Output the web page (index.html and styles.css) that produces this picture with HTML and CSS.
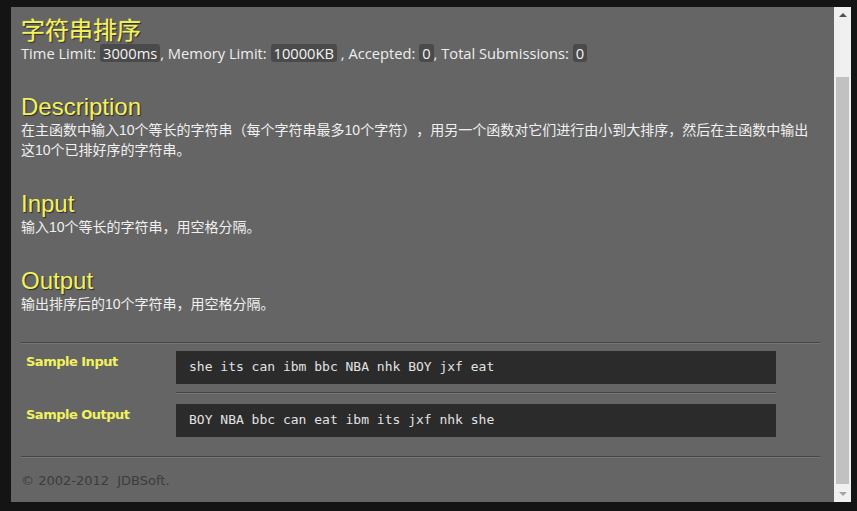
FILE: index.html
```html
<!DOCTYPE html>
<html>
<head>
<meta charset="utf-8">
<link rel="stylesheet" href="styles.css">
</head>
<body>
<div class="frame">
  <div class="window">
    <div class="content">
      <h1 class="title">字符串排序</h1>
      <div class="meta">Time Limit: <span class="badge">3000ms</span>, Memory Limit: <span class="badge">10000KB</span> , Accepted: <span class="badge">0</span>, Total Submissions: <span class="badge">0</span></div>

      <h2 class="heading">Description</h2>
      <p class="text">在主函数中输入10个等长的字符串（每个字符串最多10个字符），用另一个函数对它们进行由小到大排序，然后在主函数中输出这10个已排好序的字符串。</p>

      <h2 class="heading">Input</h2>
      <p class="text">输入10个等长的字符串，用空格分隔。</p>

      <h2 class="heading">Output</h2>
      <p class="text">输出排序后的10个字符串，用空格分隔。</p>

      <hr class="rule">
      <div class="samples">
        <div class="label">Sample Input</div>
        <div class="cell">
          <pre class="code">she its can ibm bbc NBA nhk BOY jxf eat</pre>
          <hr class="rule inner">
        </div>
        <div class="label">Sample Output</div>
        <div class="cell">
          <pre class="code">BOY NBA bbc can eat ibm its jxf nhk she</pre>
        </div>
      </div>
      <hr class="rule foot-rule">
      <div class="footer">© 2002-2012 &nbsp;JDBSoft.</div>
    </div>
    <div class="scrollbar">
      <div class="arrow up"></div>
      <div class="track"><div class="thumb"></div></div>
      <div class="arrow down"></div>
    </div>
  </div>
</div>
</body>
</html>
```
FILE: styles.css
```css
html, body {
  margin: 0;
  padding: 0;
  background: #141414;
}
.frame {
  width: 857px;
  height: 511px;
  box-sizing: border-box;
  padding: 7px 6px 9px 11px;
}
.window {
  display: flex;
  height: 495px;
}
.content {
  flex: 1;
  background: #656565;
  padding: 0 14px 0 10px;
  overflow: hidden;
  font-family: "Noto Sans CJK SC", sans-serif;
  color: #f0f0f0;
  text-spacing-trim: space-all;
}
.title {
  margin: 8px 0 0;
  font-size: 24px;
  line-height: 28px;
  font-weight: normal;
  color: #f2f25e;
  text-shadow: 1px 1px 1px #2a2a2a, 0 0 1px #f2f25e;
  font-family: "Noto Sans CJK SC", sans-serif;
}
.meta {
  margin-top: 0;
  font-family: "Open Sans", "Noto Sans CJK SC", sans-serif;
  font-size: 14.7px;
  line-height: 20px;
  color: #eeeeee;
}
.badge {
  display: inline-block;
  background: #4a4a4a;
  border-radius: 3px;
  padding: 0 3px;
  line-height: 18px;
  color: #f4f4f4;
}
.heading {
  margin: 31px 0 0;
  font-family: "Liberation Sans", Arial, sans-serif;
  font-size: 24px;
  line-height: 26px;
  font-weight: normal;
  color: #f2f25e;
  text-shadow: 1px 1px 1px #2a2a2a;
}
.text {
  margin: 0;
  font-size: 14px;
  line-height: 20px;
  font-family: "Liberation Sans", "Noto Sans CJK SC", sans-serif;
  color: #f0f0f0;
  text-spacing-trim: space-all;
}
.rule {
  height: 0;
  border: 0;
  border-top: 1px solid #454545;
  border-bottom: 1px solid #777777;
  margin: 28px 0 0;
}
.samples {
  display: grid;
  grid-template-columns: 155px 600px;
  margin-top: 7px;
}
.label {
  padding: 3px 0 0 5px;
  font-family: "DejaVu Sans", sans-serif;
  font-weight: bold;
  font-size: 13px;
  line-height: 16px;
  color: #f2f25e;
  letter-spacing: -0.5px;
}
.code {
  margin: 0;
  background: #2b2b2b;
  height: 33px;
  box-sizing: border-box;
  padding: 6px 13px;
  font-family: "DejaVu Sans Mono", monospace;
  font-size: 13px;
  line-height: 19px;
  color: #e2e2e2;
}
.rule.inner {
  margin: 8px 0 10px;
}
.foot-rule {
  margin-top: 19px;
}
.footer {
  margin-top: 13px;
  font-family: "DejaVu Sans", sans-serif;
  font-size: 13px;
  line-height: 20px;
  color: #3c3c3c;
}
.scrollbar {
  width: 17px;
  background: #f0f0f0;
  display: flex;
  flex-direction: column;
}
.arrow {
  height: 17px;
  position: relative;
}
.arrow::after {
  content: "";
  position: absolute;
  left: 5px;
  width: 0;
  height: 0;
  border-left: 4px solid transparent;
  border-right: 4px solid transparent;
}
.arrow.up::after {
  top: 6px;
  border-bottom: 4px solid #505050;
}
.arrow.down::after {
  top: 7px;
  border-top: 4px solid #a3a3a3;
}
.track {
  flex: 1;
  display: flex;
  flex-direction: column;
  justify-content: flex-end;
  padding: 0 2px;
}
.thumb {
  height: 407px;
  background: #c1c1c1;
  margin-bottom: 1px;
}
```
